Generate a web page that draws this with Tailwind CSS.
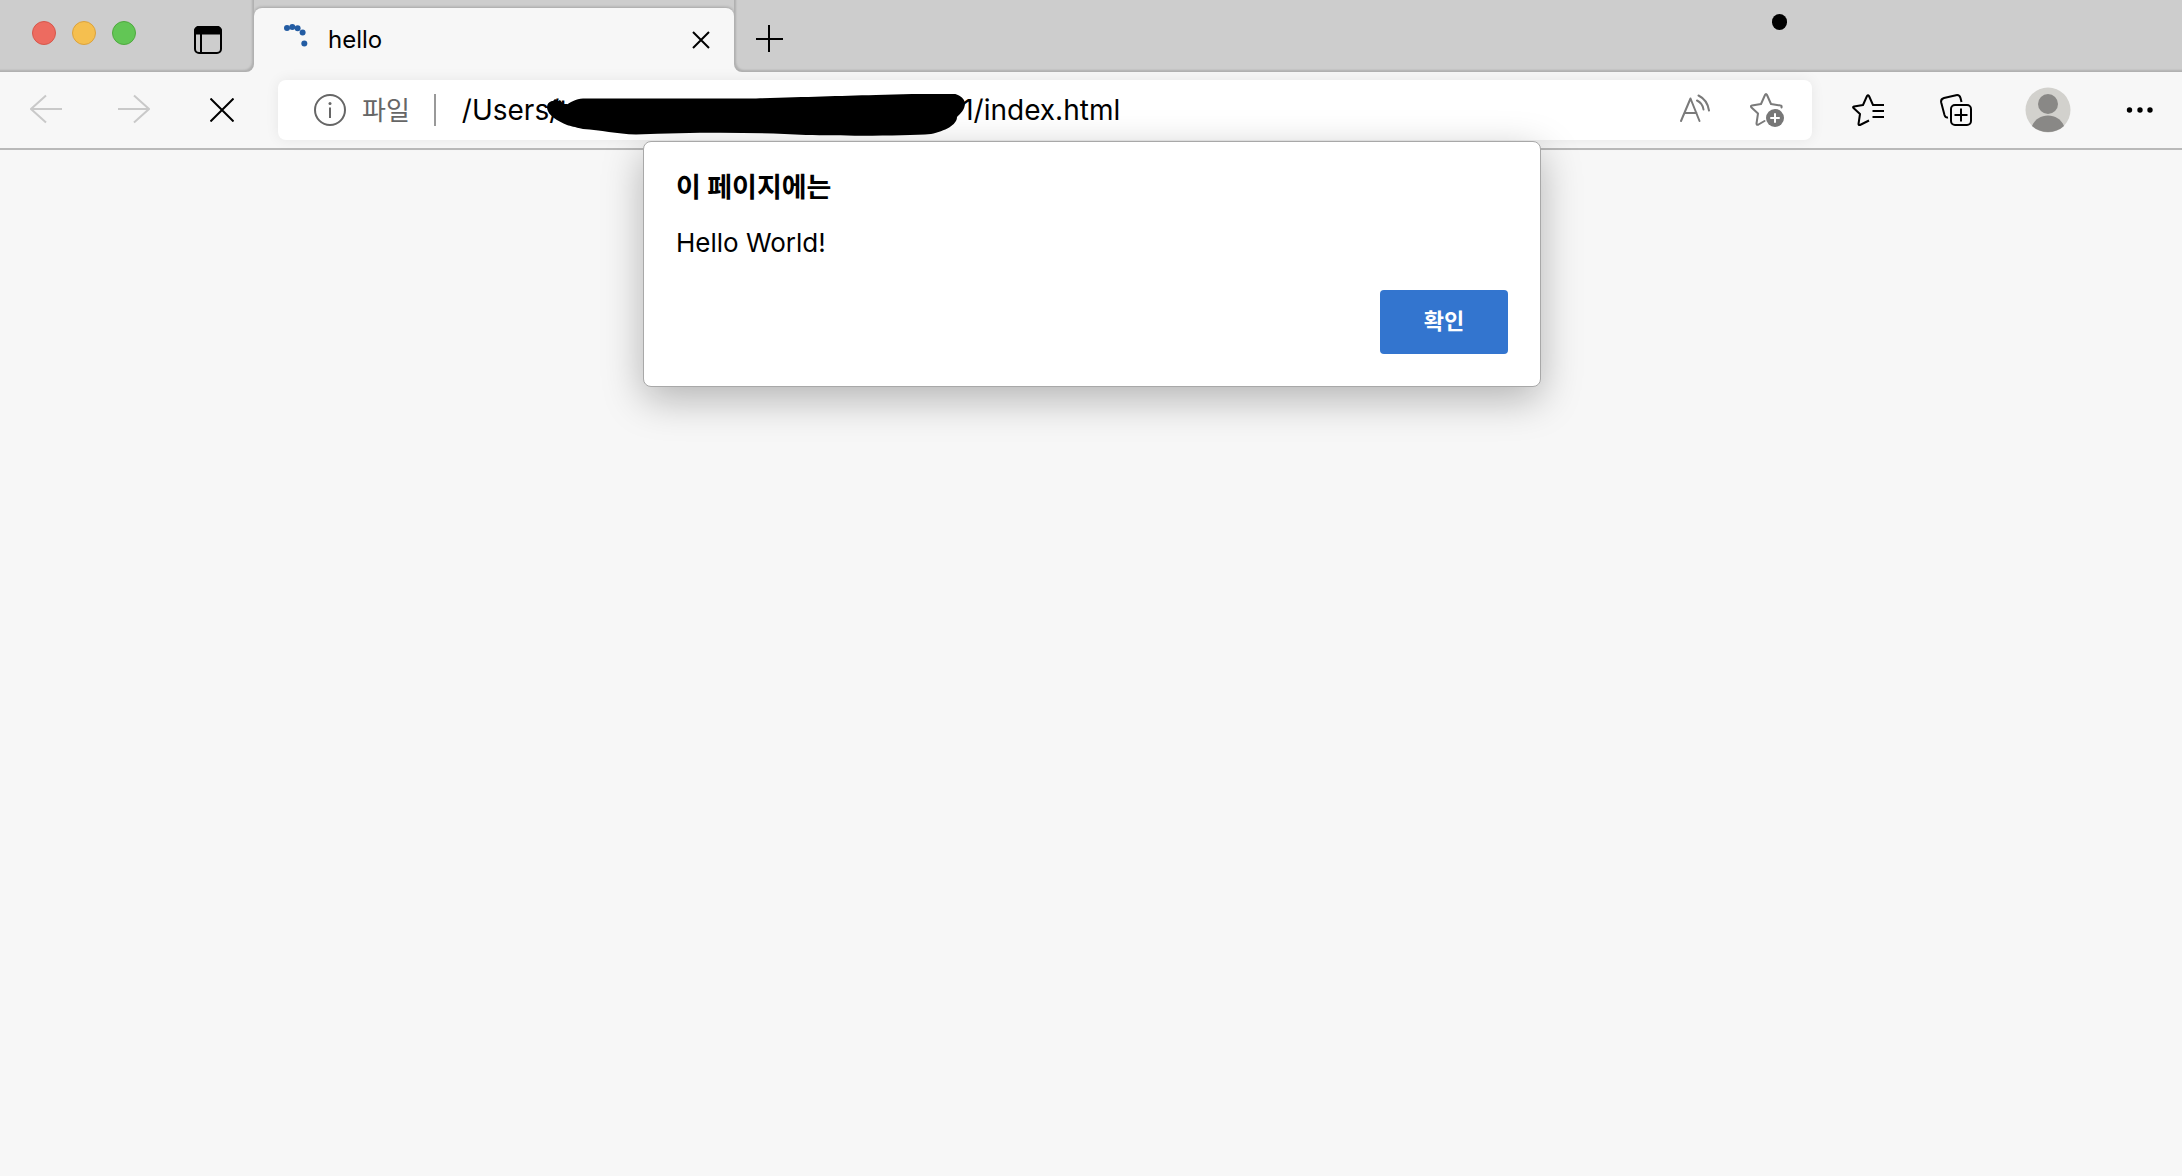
<!DOCTYPE html>
<html lang="ko">
<head>
    <meta charset="UTF-8">
    <meta name="viewport" content="width=device-width, initial-scale=1.0">
    <title>hello</title>
    <script src="https://cdn.jsdelivr.net/npm/@tailwindcss/browser@4"></script>
</head>
<body class="min-h-screen bg-[#f7f7f7] text-black font-['Inter','Noto_Sans_CJK_KR',sans-serif]">
    <header>
        <!-- Tab strip -->
        <div class="relative flex h-[72px] bg-[#f7f7f7]">
            <div class="flex w-[254px] items-center rounded-br-lg bg-[#cdcdcd] pl-8 shadow-[inset_-2px_-2px_2px_rgba(0,0,0,0.14)]">
                <div class="mb-1.5 flex gap-4">
                    <button aria-label="닫기" class="size-6 rounded-full border border-[#d6574b] bg-[#ed6b60]"></button>
                    <button aria-label="최소화" class="size-6 rounded-full border border-[#dba23d] bg-[#f5bf4f]"></button>
                    <button aria-label="확대" class="size-6 rounded-full border border-[#4fa93f] bg-[#62c655]"></button>
                </div>
                <button aria-label="탭 작업 메뉴" class="mt-2 ml-[58px]">
                    <svg class="size-7" viewBox="0 0 28 28" fill="none" stroke="#000" stroke-width="2">
                        <rect x="1" y="1" width="26" height="26" rx="4"/>
                        <path d="M1 7.5V5a4 4 0 0 1 4-4h18a4 4 0 0 1 4 4v2.500z" fill="#000"/>
                        <path d="M7 8v19"/>
                    </svg>
                </button>
            </div>
            <div class="w-[480px] bg-[#cdcdcd] pt-2">
                <div class="flex h-16 items-center rounded-t-lg bg-[#f7f7f7] pr-6 pl-7 shadow-[0_-1px_3px_rgba(0,0,0,0.2)] [clip-path:inset(-6px_0_0_0)]">
                    <svg class="size-8 shrink-0" viewBox="0 0 32 32" fill="#235ca3">
                        <circle cx="5" cy="4" r="3"/>
                        <circle cx="10.300" cy="3" r="3"/>
                        <circle cx="15.600" cy="4.300" r="3"/>
                        <circle cx="20.600" cy="8.400" r="3"/>
                        <circle cx="22.300" cy="19.400" r="3"/>
                    </svg>
                    <span class="ml-3.5 flex-1 text-2xl">hello</span>
                    <button aria-label="탭 닫기">
                        <svg class="size-[18px]" viewBox="0 0 18 18" stroke="#000" stroke-width="2">
                            <path d="M1 1l16 16M17 1L1 17"/>
                        </svg>
                    </button>
                </div>
            </div>
            <div class="flex flex-1 items-center rounded-bl-lg bg-[#cdcdcd] pl-5 shadow-[inset_2px_-2px_2px_rgba(0,0,0,0.14)]">
                <button aria-label="새 탭" class="mt-1.5 ml-0.5">
                    <svg class="size-7" viewBox="0 0 28 28" stroke="#000" stroke-width="2">
                        <path d="M13 0v27M0 14h27"/>
                    </svg>
                </button>
            </div>
            <span class="absolute top-3.5 right-[395px] h-4 w-[15px] rounded-full bg-black"></span>
        </div>

        <!-- Toolbar -->
        <div class="flex h-[78px] items-center border-b-2 border-[#b9b9b9] pl-0.5">
            <button aria-label="뒤로" class="flex w-[88px] justify-center" disabled>
                <svg class="size-8" viewBox="0 0 32 32" fill="none" stroke="#c9c9c9" stroke-width="2">
                    <path d="M32 15H1M16 1.500L1 15l15 13.500"/>
                </svg>
            </button>
            <button aria-label="앞으로" class="flex w-[88px] justify-center" disabled>
                <svg class="size-8" viewBox="0 0 32 32" fill="none" stroke="#c9c9c9" stroke-width="2">
                    <path d="M0 15h31M16 1.500L31 15 16 28.500"/>
                </svg>
            </button>
            <button aria-label="중지" class="flex w-[88px] justify-center">
                <svg class="size-6" viewBox="0 0 24 24" stroke="#000" stroke-width="2">
                    <path d="M0.500 0.500l23 23M23.500 0.500l-23 23"/>
                </svg>
            </button>

            <div class="relative mx-3 flex h-[60px] flex-1 items-center rounded-lg bg-white pr-7 pl-9 shadow-[0_0_14px_rgba(0,0,0,0.07)]">
                <button class="flex items-center gap-4 text-[#666]">
                    <svg class="size-8" viewBox="0 0 32 32" fill="none" stroke="currentColor" stroke-width="2">
                        <circle cx="16" cy="16" r="15"/>
                        <path d="M16 13.500v10.500"/>
                        <circle cx="16" cy="9.500" r="1.500" fill="currentColor" stroke="none"/>
                    </svg>
                    <span class="text-[26px]">파일</span>
                </button>
                <span class="ml-6 h-8 w-0.5 bg-[#999]"></span>
                <input type="text" aria-label="주소" class="ml-[26px] min-w-0 flex-1 bg-transparent text-[28px] outline-none" value="/Users/t                                                  1/index.html">
                <!-- marker stroke over the user's folder -->
                <svg class="absolute top-3.5 left-[268px] h-[42px] w-[422px]" viewBox="0 0 422 42">
                    <path d="M1 14C1 9 4 7 7 7L9 5 12 7 14 6 19 12C24 8 30 5 37 4.500L210 4.500C260 3 290 2 330 1L402 -1C411 -1 418 3 419 9C419 16 414 20 411 23C411 31 399 37 385 40C360 42 300 42 260 41C210 38 150 38 90 40.500C70 40 55 36 37 35C28 33 25 32 21 31C12 27 2 22 1 14Z"/>
                </svg>
                <button aria-label="소리내어 읽기" class="mr-10">
                    <svg class="h-8 w-[30px]" viewBox="0 0 30 32" fill="none" stroke="#7a7a7a" stroke-width="2" stroke-linecap="round" stroke-linejoin="round">
                        <path d="M1 27L10.500 4.500 19.500 27M4.500 19h12"/>
                        <path d="M17 6.500c4 2 6 5 6.500 9M18.500 1.500c6 3 9.500 8 10.500 15"/>
                    </svg>
                </button>
                <button aria-label="즐겨찾기에 추가">
                    <svg class="h-9 w-[34px]" viewBox="0 0 34 36" fill="none" stroke="#7a7a7a" stroke-width="2" stroke-linejoin="round" stroke-linecap="round">
                        <path d="M31.500 15.500q.5-2-1-2L21 12 17 3Q16 1 15 3l-4 9-9 1.500q-2 .5-.5 2L8 21.500 6.500 31.500q0 2 2 1l6-3.500"/>
                        <circle cx="25" cy="26" r="9" fill="#777" stroke="none"/>
                        <path d="M25 22v8M21 26h8" stroke="#fff"/>
                    </svg>
                </button>
            </div>

            <button aria-label="즐겨찾기" class="flex w-[88px] justify-center">
                <svg class="size-8" viewBox="0 0 32 32" fill="none" stroke="#000" stroke-width="2" stroke-linejoin="round">
                    <path d="M32 11H21L17 2q-1-1.500-2 0l-4 9-9 1.500q-1.500.5-.5 1.500L8 20 6.500 30q0 1.500 1.500 1l9-4.500"/>
                    <path d="M20.500 17H32M20.500 23H32"/>
                </svg>
            </button>
            <button aria-label="컬렉션" class="flex w-[88px] justify-center">
                <svg class="size-8" viewBox="0 0 32 32" fill="none" stroke="#000" stroke-width="2" stroke-linejoin="round">
                    <path d="M21.500 8l-1-4q-1-3.500-4.500-2.800L4 4Q.5 5 1.200 8.500L4.500 21q1 3 3.500 2.500"/>
                    <rect x="11" y="11" width="20" height="20" rx="4"/>
                    <path d="M21 14.500v13M14.500 21h13"/>
                </svg>
            </button>
            <button aria-label="프로필" class="flex w-24 justify-center">
                <svg class="size-[46px]" viewBox="0 0 46 46">
                    <circle cx="23" cy="23" r="22.500" fill="#d2d1cd"/>
                    <circle cx="23" cy="17" r="10" fill="#898886"/>
                    <path d="M7 39C10 32 16 28.500 23 28.500S36 32 39 39C30 47 16 47 7 39Z" fill="#898886"/>
                </svg>
            </button>
            <button aria-label="설정 및 기타" class="flex w-[86px] justify-center">
                <svg class="h-2 w-7" viewBox="0 0 28 8">
                    <circle cx="4.500" cy="4" r="2.700"/>
                    <circle cx="15" cy="4" r="2.700"/>
                    <circle cx="25" cy="4" r="2.700"/>
                </svg>
            </button>
        </div>
    </header>

    <!-- Alert -->
    <div class="absolute inset-x-0 top-[141px] flex justify-center pl-0.5">
        <div role="alertdialog" aria-labelledby="alertTitle" aria-describedby="alertText" class="w-[898px] rounded-lg border border-[#a8a8a8] bg-white px-8 pt-7 pb-8 shadow-[0_12px_40px_rgba(0,0,0,0.28)]">
            <h1 id="alertTitle" class="text-[27px] leading-9 font-bold">이 페이지에는</h1>
            <p id="alertText" class="mt-[19px] text-[26px] leading-9">Hello World!</p>
            <div class="mt-[29px] flex justify-end">
                <button class="h-16 w-32 rounded bg-[#3375cf] pb-0.5 text-[22px] font-bold text-white">확인</button>
            </div>
        </div>
    </div>
</body>
</html>
